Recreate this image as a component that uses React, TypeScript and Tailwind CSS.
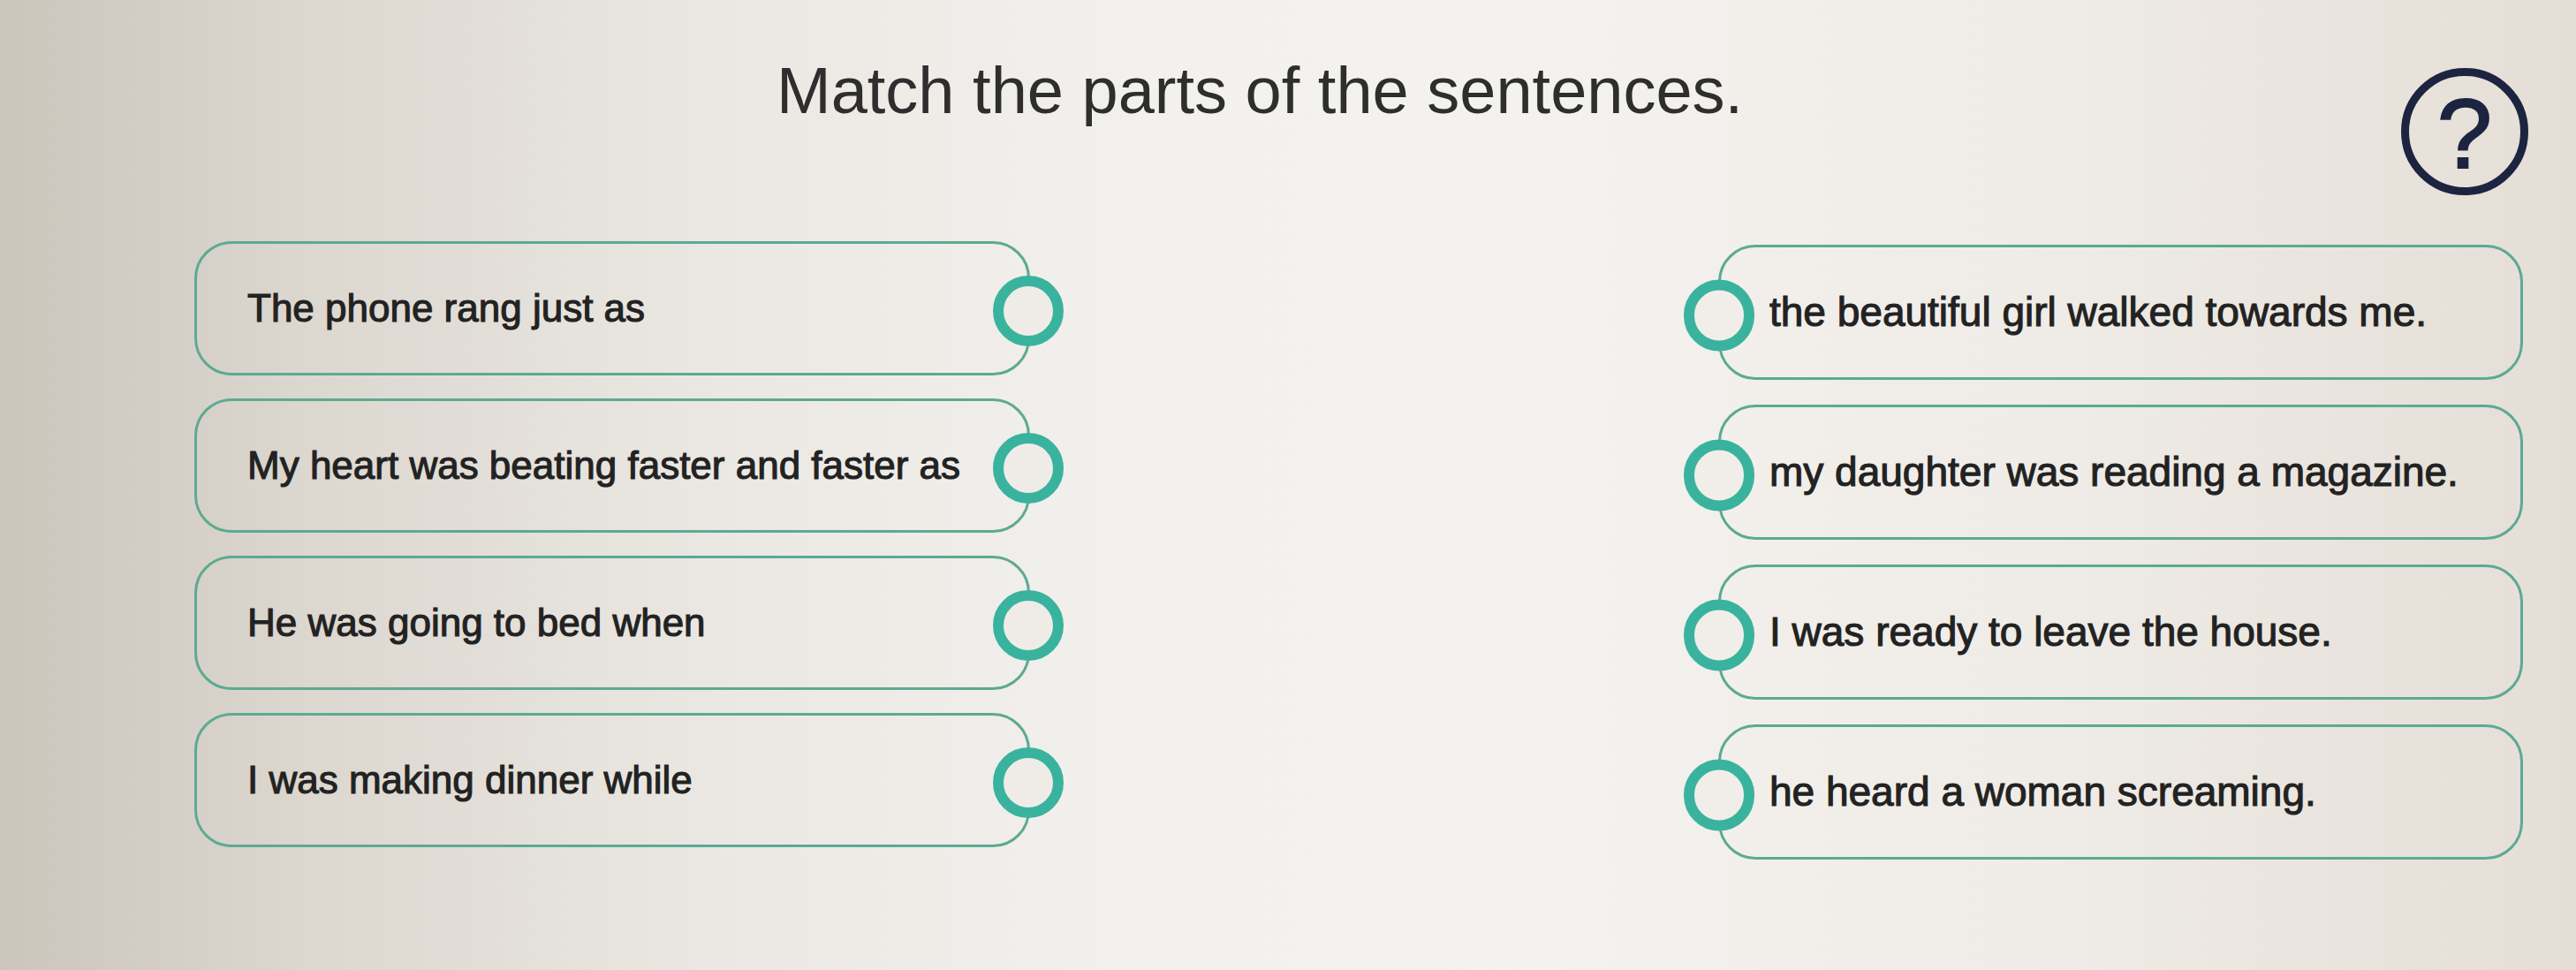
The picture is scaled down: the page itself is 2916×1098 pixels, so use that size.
import React from "react";

const left = [
  "The phone rang just as",
  "My heart was beating faster and faster as",
  "He was going to bed when",
  "I was making dinner while",
];
const right = [
  "the beautiful girl walked towards me.",
  "my daughter was reading a magazine.",
  "I was ready to leave the house.",
  "he heard a woman screaming.",
];

function Ring({ side }: { side: "left" | "right" }) {
  return (
    <span
      className={
        side === "right"
          ? "absolute right-[-41px] top-[calc(50%+3px)] -translate-y-1/2 w-[80px] h-[80px] rounded-full border-[12px] border-[#3ab39e] bg-[#efece7]"
          : "absolute left-[-42px] top-[calc(50%+3px)] -translate-y-1/2 w-[80px] h-[81px] rounded-full border-[12px] border-[#3ab39e] bg-[#f1eeea]"
      }
    />
  );
}

export default function App() {
  return (
    <div
      className="w-[2916px] h-[1098px] overflow-hidden flex flex-col bg-[linear-gradient(90deg,#cbc5bc_0%,#dcd7cf_12%,#ebe8e3_28%,#f3f1ee_45%,#f4f2ef_60%,#efebe6_80%,#e4ded6_100%)]"
      style={{ fontFamily: '"Liberation Sans", Arial, sans-serif' }}
    >
      <header className="flex items-start pt-[66px] pl-[879px] pr-[54px]">
        <h1 className="text-[74px] leading-[74px] font-normal text-[#2e2e2e] whitespace-nowrap">
          Match the parts of the sentences.
        </h1>
        <div className="ml-auto mt-[11px] w-[144px] h-[144px] rounded-full border-[9px] border-[#1c2440] flex items-center justify-center">
          <span className="text-[112px] leading-none text-[#1c2440] mt-[6px] [-webkit-text-stroke:2px_#1c2440]">?</span>
        </div>
      </header>

      <main className="flex pl-[220px] mt-[52px]">
        <div className="w-[946px] flex flex-col gap-[26px]">
          {left.map((t) => (
            <div
              key={t}
              className="relative h-[152px] rounded-[42px] border-[3px] border-[#5caa93] flex items-center pl-[57px] pr-[60px]"
            >
              <span className="text-[44px] text-[#222222] whitespace-nowrap [-webkit-text-stroke:1.1px_#222222]">
                {t}
              </span>
              <Ring side="right" />
            </div>
          ))}
        </div>
        <div className="ml-[779px] w-[911px] flex flex-col gap-[28px] pt-[4px]">
          {right.map((t) => (
            <div
              key={t}
              className="relative h-[153px] rounded-[42px] border-[3px] border-[#5caa93] flex items-center pl-[55px] pr-[40px]"
            >
              <span className="text-[46px] text-[#222222] whitespace-nowrap [-webkit-text-stroke:1.1px_#222222]">
                {t}
              </span>
              <Ring side="left" />
            </div>
          ))}
        </div>
      </main>
    </div>
  );
}
